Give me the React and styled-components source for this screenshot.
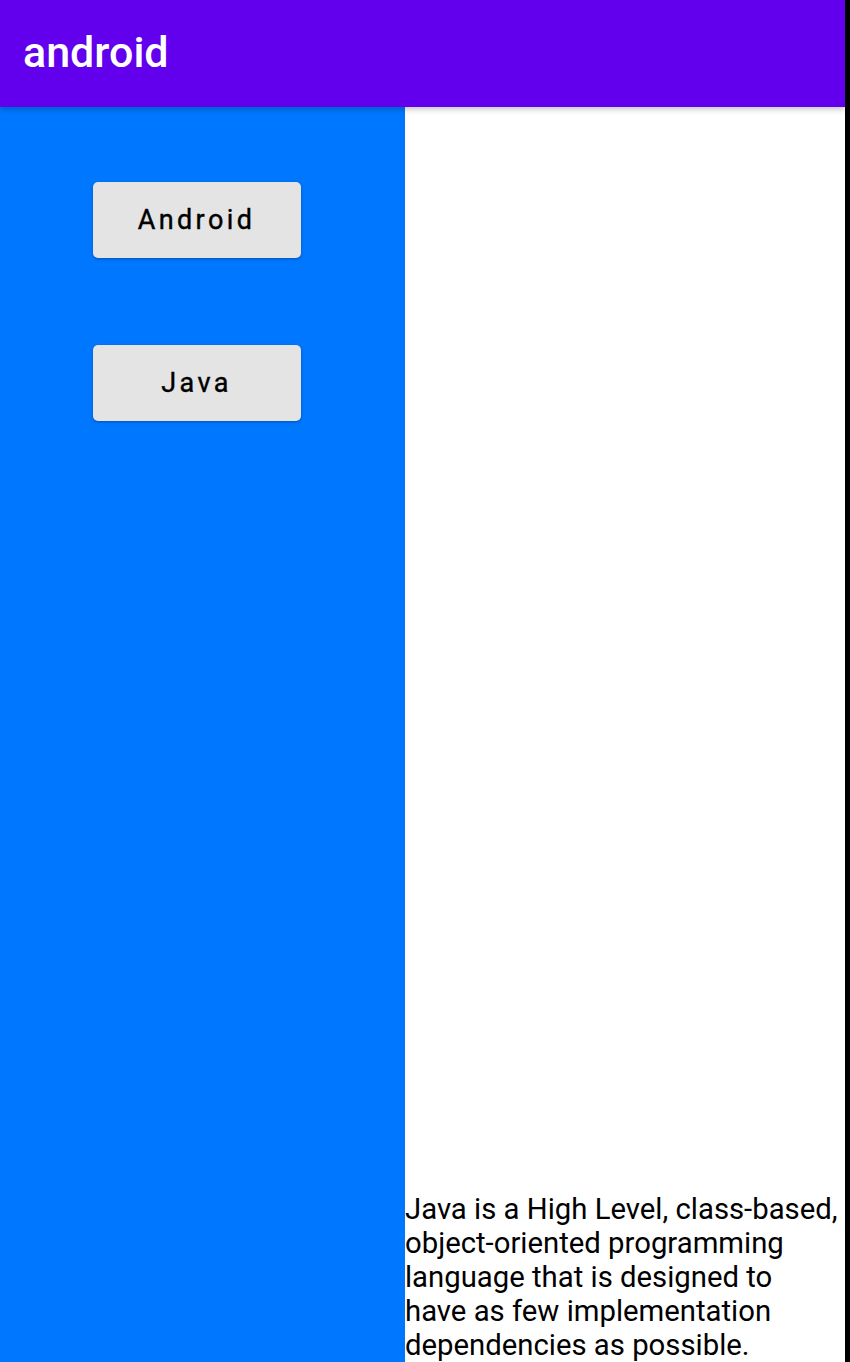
import React from "react";
import styled, { createGlobalStyle } from "styled-components";

const GlobalStyle = createGlobalStyle`
  html, body {
    margin: 0;
    padding: 0;
    background: #000;
  }
  body {
    font-family: Roboto, "Liberation Sans", sans-serif;
  }
`;

const StScreen = styled.div`
  width: 845px;
  height: 1362px;
  display: flex;
  flex-direction: column;
  background: #fff;
  overflow: hidden;
`;

const StToolbar = styled.div`
  height: 107px;
  flex-shrink: 0;
  background-color: #6200ee;
  display: flex;
  align-items: center;
  padding-left: 23px;
  box-shadow: 0 2px 6px rgba(0, 0, 0, 0.25);
  position: relative;
  z-index: 1;
`;

const StTitle = styled.h1`
  margin: 0;
  color: #fff;
  font-size: 43px;
  font-weight: 500;
  padding-bottom: 4px;
`;

const StBody = styled.div`
  flex: 1;
  display: flex;
  min-height: 0;
`;

const StSide = styled.div`
  width: 405px;
  background-color: #0077ff;
  display: flex;
  flex-direction: column;
  align-items: center;
  gap: 87px;
  padding: 75px 12px 0 0;
  box-sizing: border-box;
`;

const StButton = styled.button`
  width: 208px;
  height: 76px;
  border: none;
  border-radius: 5px;
  background-color: #e4e4e4;
  box-shadow: 0 1px 3px rgba(0, 0, 0, 0.3);
  font-family: Roboto, "Liberation Sans", sans-serif;
  font-size: 27px;
  font-weight: 400;
  letter-spacing: 3.4px;
  color: #000;
  cursor: pointer;
  padding: 0;
  -webkit-text-stroke: 0.4px #000;
`;

const StContent = styled.div`
  flex: 1;
  display: flex;
  flex-direction: column;
  justify-content: flex-end;
`;

const StText = styled.p`
  margin: 0;
  max-width: 434px;
  font-size: 29.3px;
  line-height: 34px;
  color: #000;
`;

function App() {
  return (
    <>
      <GlobalStyle />
      <StScreen>
        <StToolbar>
          <StTitle>android</StTitle>
        </StToolbar>
        <StBody>
          <StSide>
            <StButton>Android</StButton>
            <StButton>Java</StButton>
          </StSide>
          <StContent>
            <StText>
              Java is a High Level, class-based, object-oriented programming
              language that is designed to have as few implementation
              dependencies as possible.
            </StText>
          </StContent>
        </StBody>
      </StScreen>
    </>
  );
}

export default App;
